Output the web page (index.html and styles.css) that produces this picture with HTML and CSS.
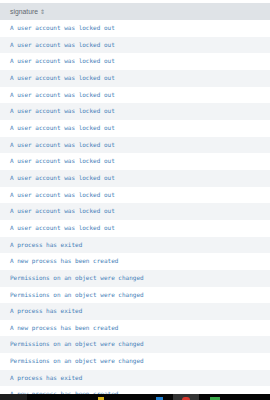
FILE: index.html
```html
<!DOCTYPE html>
<html lang="en">
<head>
  <meta charset="UTF-8">
  <meta name="viewport" content="width=device-width, initial-scale=1">
  <title>signature</title>
  <link rel="stylesheet" href="styles.css">
</head>
<body>
  <div class="screen">
    <div class="results">
      <div class="table-head">signature <span class="sort">&#8661;</span></div>
      <ul class="rows">
        <li>A user account was locked out</li>
        <li>A user account was locked out</li>
        <li>A user account was locked out</li>
        <li>A user account was locked out</li>
        <li>A user account was locked out</li>
        <li>A user account was locked out</li>
        <li>A user account was locked out</li>
        <li>A user account was locked out</li>
        <li>A user account was locked out</li>
        <li>A user account was locked out</li>
        <li>A user account was locked out</li>
        <li>A user account was locked out</li>
        <li>A user account was locked out</li>
        <li>A process has exited</li>
        <li>A new process has been created</li>
        <li>Permissions on an object were changed</li>
        <li>Permissions on an object were changed</li>
        <li>A process has exited</li>
        <li>A new process has been created</li>
        <li>Permissions on an object were changed</li>
        <li>Permissions on an object were changed</li>
        <li>A process has exited</li>
        <li>A new process has been created</li>
      </ul>
    </div>

    <!-- windows taskbar peeking in at the bottom -->
    <div class="taskbar">
      <span class="start"></span>
      <span class="tb-icon yellow"></span>
      <span class="tb-icon blue"></span>
      <span class="tb-slot active"><span class="tb-icon red"></span></span>
      <span class="tb-icon green"></span>
    </div>
  </div>
</body>
</html>
```

FILE: styles.css
```css
html, body {
  margin: 0;
  padding: 0;
  background-color: #ffffff;
}

.screen {
  width: 270px;
  height: 400px;
  display: flex;
  flex-direction: column;
  overflow: hidden;
}

.results {
  flex: 1;
  overflow: hidden;
  padding-top: 3px;
}

.table-head {
  height: 17px;
  line-height: 17px;
  background-color: #dfe3e7; /* header strip */
  color: #5f6770;
  font-family: 'Liberation Sans', Arial, sans-serif;
  font-size: 6.8px;
  padding-left: 10px;
}

.sort {
  font-size: 6px;
  color: #7a828b;
}

.rows {
  list-style: none;
  margin: 0;
  padding: 0;
}

.rows li {
  height: 16.67px;
  line-height: 16.67px;
  padding-left: 10px;
  font-family: 'DejaVu Sans Mono', monospace;
  font-size: 6px;
  color: #4580b8;
  white-space: nowrap;
}

.rows li:nth-child(even) {
  background-color: #f2f4f6;
}

.taskbar {
  height: 6px;
  background-color: #050505;
  display: flex;
  align-items: flex-end;
}

.start {
  width: 27px;
  height: 6px;
  background-color: #1e1e1e;
}

.tb-icon {
  width: 6px;
  height: 3px;
}

.yellow {
  margin-left: 71px;
  background-color: #d8b21a;
}

.blue {
  margin-left: 52px;
  width: 7px;
  background-color: #1f7fd0;
}

.tb-slot {
  margin-left: 10px;
  width: 26px;
  height: 6px;
  background-color: #333333;
  display: flex;
  align-items: flex-end;
  justify-content: center;
}

.red {
  width: 8px;
  border-radius: 4px 4px 0 0;
  background-color: #d8362c;
}

.green {
  margin-left: 11px;
  width: 10px;
  background-color: #3aa84a;
}
```
